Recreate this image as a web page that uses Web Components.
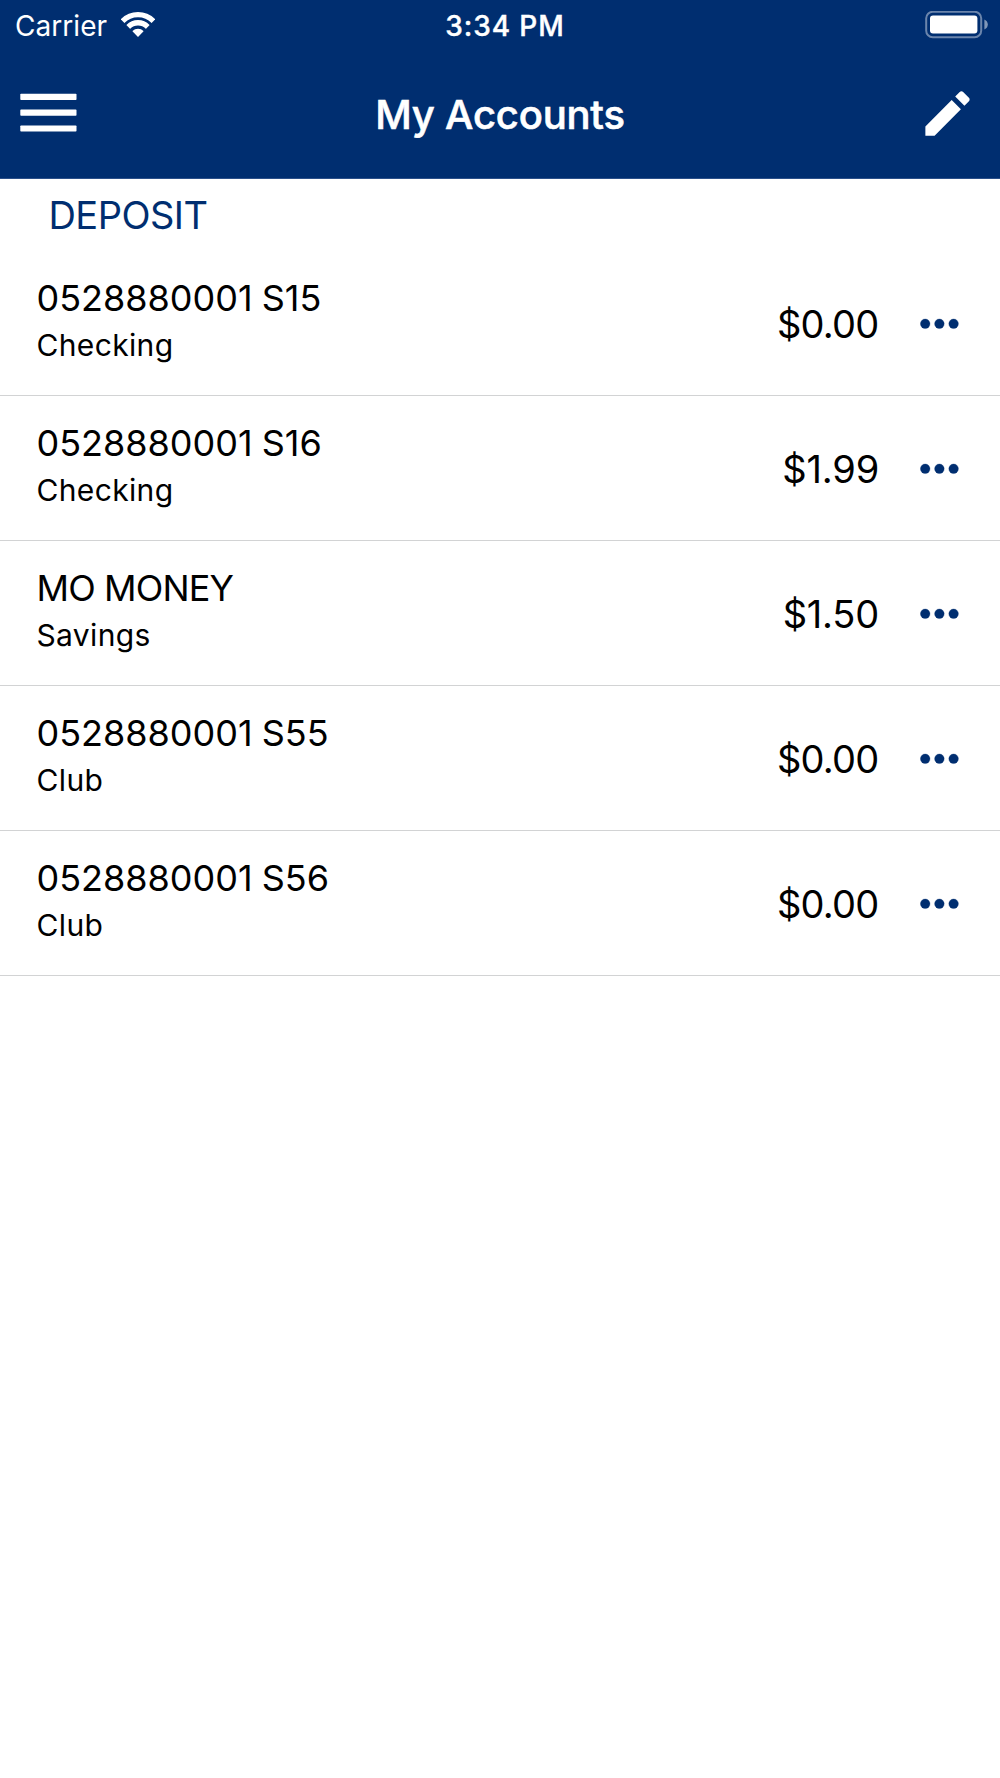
<!DOCTYPE html>
<html lang="en">
<head>
  <meta charset="UTF-8">
  <meta name="viewport" content="width=device-width, initial-scale=1.0">
  <title>My Accounts</title>
  <style>
    :root {
      --brand: #002e70;
      --divider: #d2d3d4;
    }

    body {
      margin: 0;
      min-height: 100vh;
      background: #fff;
      color: #000;
      font-family: Inter, "Liberation Sans", sans-serif;
      -webkit-font-smoothing: antialiased;
    }

    /* names in capitals are set tighter than account numbers */
    .nickname {
      --name-tracking: -0.85px;
      --name-space: 0;
    }
  </style>
</head>
<body>
  <app-header>
    <status-bar carrier="Carrier" time="3:34 PM"></status-bar>
    <nav-bar>My Accounts</nav-bar>
  </app-header>

  <account-group>
    <span slot="title">DEPOSIT</span>
    <account-row name="0528880001 S15" type="Checking" balance="$0.00"></account-row>
    <account-row name="0528880001 S16" type="Checking" balance="$1.99"></account-row>
    <account-row class="nickname" name="MO MONEY" type="Savings" balance="$1.50"></account-row>
    <account-row name="0528880001 S55" type="Club" balance="$0.00"></account-row>
    <account-row name="0528880001 S56" type="Club" balance="$0.00"></account-row>
  </account-group>

  <script>
    class AppHeader extends HTMLElement {
      constructor() {
        super();
        this.attachShadow({ mode: 'open' });
      }

      connectedCallback() {
        this.shadowRoot.innerHTML = `
          <style>
            :host {
              display: flex;
              flex-direction: column;
              box-sizing: border-box;
              height: 179px;
              background: var(--brand);
              border-bottom: 1px solid #2b508a;
              color: #fff;
            }
          </style>
          <slot></slot>
        `;
      }
    }

    class StatusBar extends HTMLElement {
      constructor() {
        super();
        this.attachShadow({ mode: 'open' });
      }

      connectedCallback() {
        this.shadowRoot.innerHTML = `
          <style>
            :host {
              display: grid;
              grid-template-columns: 1fr auto 1fr;
              align-items: center;
              height: 50px;
              padding: 0 12px 0 15px;
            }
            .carrier {
              display: flex;
              align-items: center;
              gap: 13.5px;
              font-size: 28px;
              letter-spacing: 0.05px;
            }
            .carrier span,
            .time {
              padding-top: 2px;
            }
            .time {
              padding-left: 7px;
              font-size: 28px;
              font-weight: 500;
              letter-spacing: 0.9px;
              -webkit-text-stroke: 0.4px;
            }
            .carrier svg {
              margin-bottom: 2px;
            }
            .battery {
              justify-self: end;
            }
            svg {
              display: block;
            }
          </style>
          <div class="carrier">
            <span>${this.getAttribute('carrier')}</span>
            <svg width="34" height="26" viewBox="0 0 34 26">
              <clipPath id="fan"><path d="M17 26L-3 5.3V-2h40v7.3z"/></clipPath>
              <g clip-path="url(#fan)" fill="none" stroke="#fff">
                <circle cx="17" cy="25.5" r="21.8" stroke-width="5.2"/>
                <circle cx="17" cy="25.5" r="13.7" stroke-width="5.4"/>
                <circle cx="17" cy="25.5" r="3.9" stroke-width="7.8"/>
              </g>
            </svg>
          </div>
          <div class="time">${this.getAttribute('time')}</div>
          <svg class="battery" width="63" height="28" viewBox="0 0 63 28">
            <rect x="1.2" y=".8" width="55" height="25.4" rx="6.5" fill="none" stroke="#fff" stroke-opacity=".42" stroke-width="2"/>
            <rect x="5" y="4.4" width="47.4" height="18.2" rx="3" fill="#fff"/>
            <path d="M59.4 8.4q3.4 1.6 3.4 5t-3.4 5z" fill="#fff" fill-opacity=".5"/>
          </svg>
        `;
      }
    }

    class NavBar extends HTMLElement {
      constructor() {
        super();
        this.attachShadow({ mode: 'open' });
      }

      connectedCallback() {
        this.shadowRoot.innerHTML = `
          <style>
            :host {
              display: grid;
              grid-template-columns: 1fr auto 1fr;
              align-items: center;
              height: 129px;
              padding: 0 23px 0 20px;
            }
            h1 {
              margin: 0;
              padding: 3px 0 0 3px;
              font-size: 40px;
              font-weight: 500;
              letter-spacing: -0.2px;
              line-height: 126px;
              -webkit-text-stroke: 0.6px;
            }
            button {
              display: flex;
              justify-self: start;
              padding: 0;
              border: 0;
              background: none;
            }
            .menu {
              padding-bottom: 4px;
            }
            .edit {
              justify-self: end;
            }
          </style>
          <button class="menu" aria-label="Menu">
            <svg width="57" height="42" viewBox="0 0 57 42" fill="#fff">
              <rect x=".3" y="2.8" width="56.2" height="6.2" rx=".8"/>
              <rect x=".3" y="18.6" width="56.2" height="6.2" rx=".8"/>
              <rect x=".3" y="34.4" width="56.2" height="6.2" rx=".8"/>
            </svg>
          </button>
          <h1><slot></slot></h1>
          <button class="edit" aria-label="Edit">
            <svg width="59" height="59" viewBox="0 0 24 24" fill="#fff">
              <path d="M3 17.25V21h3.75L17.45 10.3 13.7 6.55 3 17.25zM20.71 7.04c.39-.39.39-1.02 0-1.41l-2.34-2.34c-.39-.39-1.02-.39-1.41 0l-1.83 1.83 3.75 3.75 1.83-1.83z"/>
            </svg>
          </button>
        `;
      }
    }

    class AccountGroup extends HTMLElement {
      constructor() {
        super();
        this.attachShadow({ mode: 'open' });
      }

      connectedCallback() {
        this.shadowRoot.innerHTML = `
          <style>
            :host {
              display: block;
            }
            h2 {
              margin: 0;
              padding-left: 48.5px;
              color: var(--brand);
              font-size: 38px;
              font-weight: 400;
              letter-spacing: -0.55px;
              line-height: 72px;
            }
          </style>
          <h2><slot name="title"></slot></h2>
          <slot></slot>
        `;
      }
    }

    class AccountRow extends HTMLElement {
      constructor() {
        super();
        this.attachShadow({ mode: 'open' });
      }

      connectedCallback() {
        this.shadowRoot.innerHTML = `
          <style>
            :host {
              display: flex;
              align-items: center;
              box-sizing: border-box;
              height: 145px;
              padding: 1px 40px 0 36.5px;
              border-bottom: 1px solid var(--divider);
            }
            .info {
              flex: 1;
              padding-bottom: 4px;
              line-height: 47px;
            }
            .name {
              font-size: 36px;
              letter-spacing: var(--name-tracking, 0);
              word-spacing: var(--name-space, -1px);
            }
            .type {
              font-size: 30px;
              letter-spacing: 0.35px;
            }
            .balance {
              margin-right: -0.5px;
              font-size: 38px;
              letter-spacing: -0.75px;
            }
            :host([balance^="$1"]) .balance {
              margin-right: -1px;
              letter-spacing: -0.2px;
            }
            button {
              display: flex;
              margin-left: 42px;
              padding: 0;
              border: 0;
              background: none;
            }
          </style>
          <div class="info">
            <div class="name">${this.getAttribute('name')}</div>
            <div class="type">${this.getAttribute('type')}</div>
          </div>
          <div class="balance">${this.getAttribute('balance')}</div>
          <button aria-label="More">
            <svg width="40" height="12" viewBox="0 0 40 12" fill="#002e70" stroke="#002e70" stroke-opacity=".3">
              <circle cx="5.2" cy="5.8" r="4.8"/>
              <circle cx="19.4" cy="5.8" r="4.8"/>
              <circle cx="33.6" cy="5.8" r="4.8"/>
            </svg>
          </button>
        `;
      }
    }

    customElements.define('app-header', AppHeader);
    customElements.define('status-bar', StatusBar);
    customElements.define('nav-bar', NavBar);
    customElements.define('account-group', AccountGroup);
    customElements.define('account-row', AccountRow);
  </script>
</body>
</html>
